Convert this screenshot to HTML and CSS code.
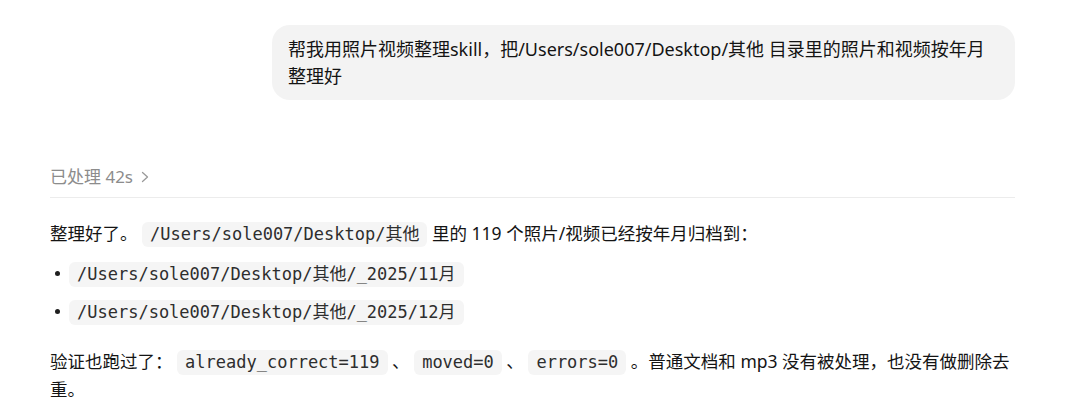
FILE: index.html
```html
<!DOCTYPE html>
<html lang="zh-CN">
<head>
<meta charset="utf-8">
<title>Chat</title>
<link rel="stylesheet" href="styles.css">
</head>
<body>
<div class="chat">
  <div class="user-row">
    <div class="bubble">帮我用照片视频整理skill，把/Users/sole007/Desktop/其他 目录里的照片和视频按年月整理好</div>
  </div>
  <div class="reply">
    <div class="status">
      <span>已处理 42s</span>
      <svg class="chev" width="10" height="12" viewBox="0 0 10 12"><path d="M2.5 1.5 L7.5 6 L2.5 10.5" fill="none" stroke="#9a9a9a" stroke-width="1.3" stroke-linecap="round" stroke-linejoin="round"/></svg>
    </div>
    <p class="para">整理好了。 <code>/Users/sole007/Desktop/其他</code> 里的 119 个照片/视频已经按年月归档到：</p>
    <ul class="list">
      <li><code>/Users/sole007/Desktop/其他/_2025/11月</code></li>
      <li><code>/Users/sole007/Desktop/其他/_2025/12月</code></li>
    </ul>
    <p class="para">验证也跑过了： <code>already_correct=119</code> 、 <code>moved=0</code> 、 <code>errors=0</code> 。普通文档和 mp3 没有被处理，也没有做删除去重。</p>
  </div>
</div>
</body>
</html>
```

FILE: styles.css
```css
html, body {
  margin: 0;
  padding: 0;
  background: #ffffff;
}

body {
  font-family: "Noto Sans", "Noto Sans CJK SC", sans-serif;
  font-size: 17.5px;
  color: #141414;
}

.chat {
  padding: 25px 65px 0 50px;
}

.user-row {
  display: flex;
  justify-content: flex-end;
}

.bubble {
  box-sizing: border-box;
  width: 743px;
  background: #f3f3f3;
  border-radius: 18px;
  padding: 11px 20px 10px 16px;
  line-height: 27px;
  font-size: 18px;
  color: #141414;
}

.reply {
  margin-top: 63px;
}

.status {
  display: flex;
  align-items: center;
  gap: 7px;
  color: #8c8c8c;
  font-size: 17px;
  line-height: 28px;
  padding-bottom: 6px;
  border-bottom: 1px solid #ececec;
}

.chev {
  display: block;
}

.para {
  margin: 21px 0 0;
  line-height: 28px;
}

.list {
  margin: 12px 0 0;
  padding: 0 0 0 19px;
  list-style: none;
}

.list li {
  position: relative;
  line-height: 28px;
  margin-bottom: 10px;
}

.list li::before {
  content: "";
  position: absolute;
  left: -14px;
  top: 12px;
  width: 5px;
  height: 5px;
  border-radius: 50%;
  background: #1f1f1f;
}

.list + .para {
  margin-top: 22px;
}

code {
  display: inline-block;
  font-family: "DejaVu Sans Mono", "Noto Sans CJK SC", monospace;
  font-size: 17px;
  line-height: 25px;
  color: #2e2e2e;
  background: #f5f5f5;
  border-radius: 6px;
  padding: 0 8px;
}
```
